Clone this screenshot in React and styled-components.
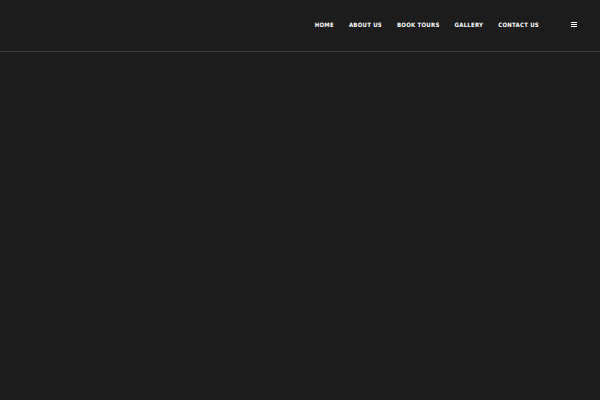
import styled, { createGlobalStyle } from "styled-components";

const GlobalStyle = createGlobalStyle`
  html, body {
    margin: 0;
    padding: 0;
    background-color: #1c1c1c;
  }
  body {
    font-family: "DejaVu Sans", "Liberation Sans", sans-serif;
  }
`;

const StyledPage = styled.div`
  min-height: 400px;
  background-color: #1c1c1c;
`;

const StyledHeader = styled.header`
  height: 52px;
  display: flex;
  align-items: center;
  justify-content: flex-end;
  padding: 0 23px 2px 0;
  border-bottom: 1px solid #3a3a3a;
  box-sizing: border-box;
`;

const StyledNav = styled.ul`
  display: flex;
  align-items: center;
  gap: 15px;
  margin: 0;
  padding: 0;
  list-style: none;
  font-size: 6px;
  line-height: 1;

  li {
    display: flex;
  }
`;

const StyledNavLink = styled.a`
  color: #ffffff;
  font-family: "DejaVu Sans Condensed", "DejaVu Sans", sans-serif;
  font-size: 6px;
  font-weight: bold;
  letter-spacing: 0.25px;
  text-transform: uppercase;
  text-decoration: none;
`;

const StyledMenuButton = styled.button`
  margin-left: 32px;
  padding: 0;
  border: none;
  background: transparent;
  display: flex;
  flex-direction: column;
  gap: 1px;
  cursor: pointer;

  span {
    display: block;
    width: 6px;
    height: 1px;
    background-color: #ffffff;
  }
`;

const links = ["Home", "About us", "Book tours", "Gallery", "Contact us"];

export default function App() {
  return (
    <>
      <GlobalStyle />
      <StyledPage>
        <StyledHeader>
          <StyledNav>
            {links.map((link) => (
              <li key={link}>
                <StyledNavLink href="#">{link}</StyledNavLink>
              </li>
            ))}
          </StyledNav>
          <StyledMenuButton aria-label="menu">
            <span />
            <span />
            <span />
          </StyledMenuButton>
        </StyledHeader>
      </StyledPage>
    </>
  );
}
